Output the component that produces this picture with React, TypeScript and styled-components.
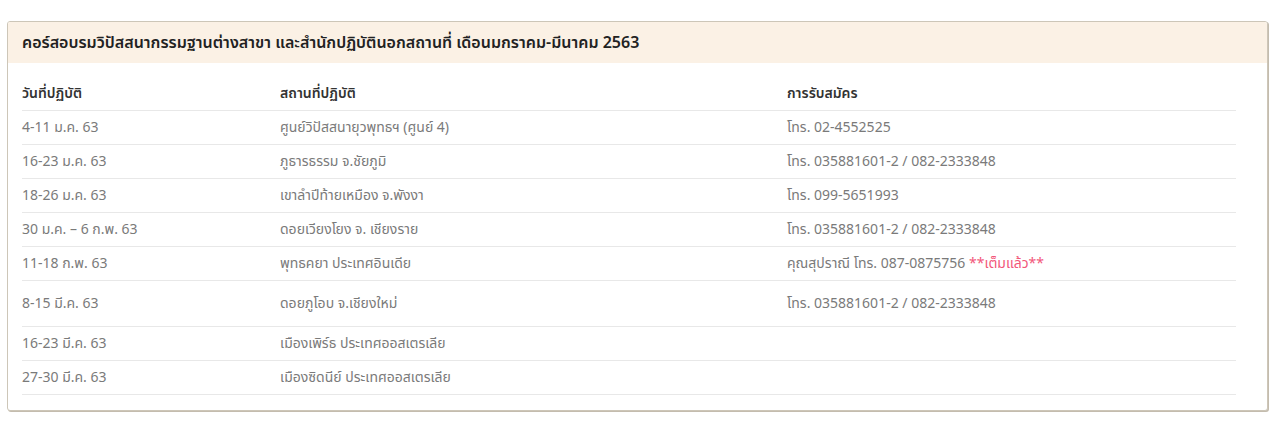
import styled, { createGlobalStyle } from "styled-components";

const GlobalStyle = createGlobalStyle`
  body {
    margin: 0;
    background: #fff;
    font-family: "Noto Sans Thai", "Noto Sans", "Liberation Sans", sans-serif;
  }
`;

type Row = {
  date: string;
  place: string;
  contact?: string;
  full?: boolean;
  tall?: boolean;
};

const rows: Row[] = [
  { date: "4-11 ม.ค. 63", place: "ศูนย์วิปัสสนายุวพุทธฯ (ศูนย์ 4)", contact: "โทร. 02-4552525" },
  { date: "16-23 ม.ค. 63", place: "ภูธารธรรม จ.ชัยภูมิ", contact: "โทร. 035881601-2 / 082-2333848" },
  { date: "18-26 ม.ค. 63", place: "เขาลำปีท้ายเหมือง จ.พังงา", contact: "โทร. 099-5651993" },
  { date: "30 ม.ค. – 6 ก.พ. 63", place: "ดอยเวียงโยง จ. เชียงราย", contact: "โทร. 035881601-2 / 082-2333848" },
  { date: "11-18 ก.พ. 63", place: "พุทธคยา ประเทศอินเดีย", contact: "คุณสุปราณี โทร. 087-0875756", full: true },
  { date: "8-15 มี.ค. 63", place: "ดอยภูโอบ จ.เชียงใหม่", contact: "โทร. 035881601-2 / 082-2333848", tall: true },
  { date: "16-23 มี.ค. 63", place: "เมืองเพิร์ธ ประเทศออสเตรเลีย" },
  { date: "27-30 มี.ค. 63", place: "เมืองซิดนีย์ ประเทศออสเตรเลีย" },
];

function App() {
  return (
    <>
      <GlobalStyle />
      <Page>
        <Panel>
          <PanelHeading>
            คอร์สอบรมวิปัสสนากรรมฐานต่างสาขา และสำนักปฏิบัตินอกสถานที่ เดือนมกราคม-มีนาคม 2563
          </PanelHeading>
          <PanelBody>
            <Table>
              <colgroup>
                <col style={{ width: 258 }} />
                <col style={{ width: 507 }} />
                <col />
              </colgroup>
              <thead>
                <tr>
                  <Th>วันที่ปฏิบัติ</Th>
                  <Th>สถานที่ปฏิบัติ</Th>
                  <Th>การรับสมัคร</Th>
                </tr>
              </thead>
              <tbody>
                {rows.map((r) => (
                  <Tr key={r.date} $tall={r.tall}>
                    <Td>{r.date}</Td>
                    <Td>{r.place}</Td>
                    <Td>
                      {r.contact}
                      {r.full && <Full> **เต็มแล้ว**</Full>}
                    </Td>
                  </Tr>
                ))}
              </tbody>
            </Table>
          </PanelBody>
        </Panel>
      </Page>
    </>
  );
}

const Page = styled.div`
  padding: 21px 15px 20px 7px;
`;

const Panel = styled.div`
  border: 1px solid #cdc6b8;
  border-radius: 3px;
  box-shadow: 1px 1px 0 #c4bcae;
  background: #fff;
  overflow: hidden;
`;

const PanelHeading = styled.div`
  background: #fbf1e5;
  height: 41px;
  display: flex;
  align-items: center;
  padding-left: 14px;
  font-size: 16px;
  font-weight: 600;
  color: #222;
`;

const PanelBody = styled.div`
  padding: 13px 31px 15px 14px;
`;

const Table = styled.table`
  width: 100%;
  border-collapse: collapse;
  table-layout: fixed;
`;

const Th = styled.th`
  text-align: left;
  font-weight: 600;
  font-size: 14px;
  color: #333;
  height: 34px;
  padding: 0;
  border-bottom: 1px solid #e8e8e8;
`;

const Tr = styled.tr<{ $tall?: boolean }>`
  height: ${(p) => (p.$tall ? "46px" : "34px")};
`;

const Td = styled.td`
  padding: 0;
  font-size: 14px;
  color: #7a7a7a;
  vertical-align: middle;
  border-bottom: 1px solid #e8e8e8;
`;

const Full = styled.span`
  color: #f2577a;
`;

export default App;
